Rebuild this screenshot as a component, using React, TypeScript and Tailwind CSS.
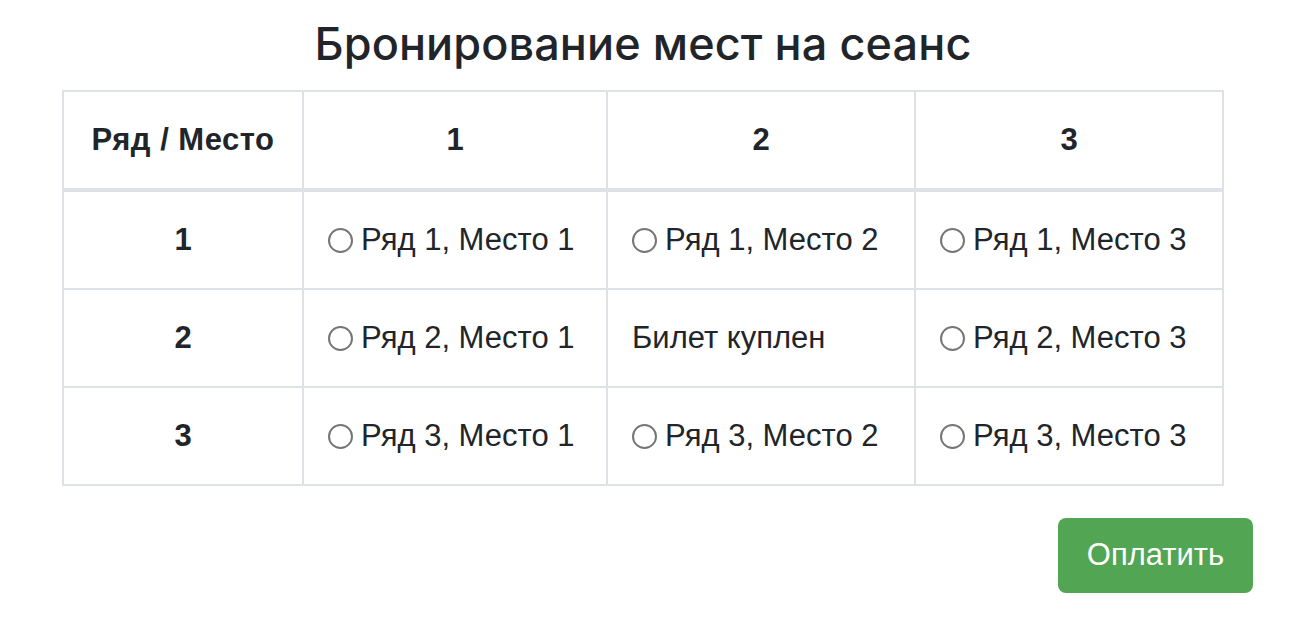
import React, { useState } from 'react';

const ROWS = [1, 2, 3];
const SEATS = [1, 2, 3];
const SOLD = ['2-2'];

export default function App() {
  const [selected, setSelected] = useState<string | null>(null);

  return (
    <div className="min-h-screen bg-white text-[#212529] font-['Liberation_Sans',Arial,sans-serif]">
      <div className="flex flex-col items-center pt-[18px] pr-[24px]">
        <h2 className="text-[45px] leading-[52px] font-medium mb-[20px] font-['Inter','Liberation_Sans',sans-serif] tracking-[0.1px]">
          Бронирование мест на сеанс
        </h2>

        {/* Seat table */}
        <div className="grid grid-cols-[240px_304px_308px_308px] border-l-2 border-t-2 border-[#dee2e6] text-[31px]">
          <div className="h-[100px] flex items-center justify-center font-bold tracking-[0.5px] border-r-2 border-b-4 border-[#dee2e6]">
            Ряд / Место
          </div>
          {SEATS.map((s) => (
            <div
              key={s}
              className="h-[100px] flex items-center justify-center font-bold border-r-2 border-b-4 border-[#dee2e6]"
            >
              {s}
            </div>
          ))}

          {ROWS.map((r) => (
            <React.Fragment key={r}>
              <div className="h-[98px] flex items-center justify-center font-bold border-r-2 border-b-2 border-[#dee2e6]">
                {r}
              </div>
              {SEATS.map((s) => {
                const id = `${r}-${s}`;
                return (
                  <div
                    key={id}
                    className="h-[98px] flex items-center px-[24px] border-r-2 border-b-2 border-[#dee2e6]"
                  >
                    {SOLD.includes(id) ? (
                      <span>Билет куплен</span>
                    ) : (
                      <label className="flex items-center gap-[8px] cursor-pointer whitespace-nowrap">
                        <span
                          onClick={() => setSelected(id)}
                          className="w-[25px] h-[25px] rounded-full border-2 border-[#767676] bg-white flex items-center justify-center shrink-0"
                        >
                          {selected === id && <span className="w-[13px] h-[13px] rounded-full bg-[#0075ff]" />}
                        </span>
                        <span>
                          Ряд {r}, Место {s}
                        </span>
                      </label>
                    )}
                  </div>
                );
              })}
            </React.Fragment>
          ))}
        </div>
      </div>

      <div className="flex justify-end pr-[57px] mt-[32px]">
        <button className="h-[75px] w-[195px] rounded-[8px] bg-[#52a552] text-white text-[31px]">
          Оплатить
        </button>
      </div>
    </div>
  );
}
